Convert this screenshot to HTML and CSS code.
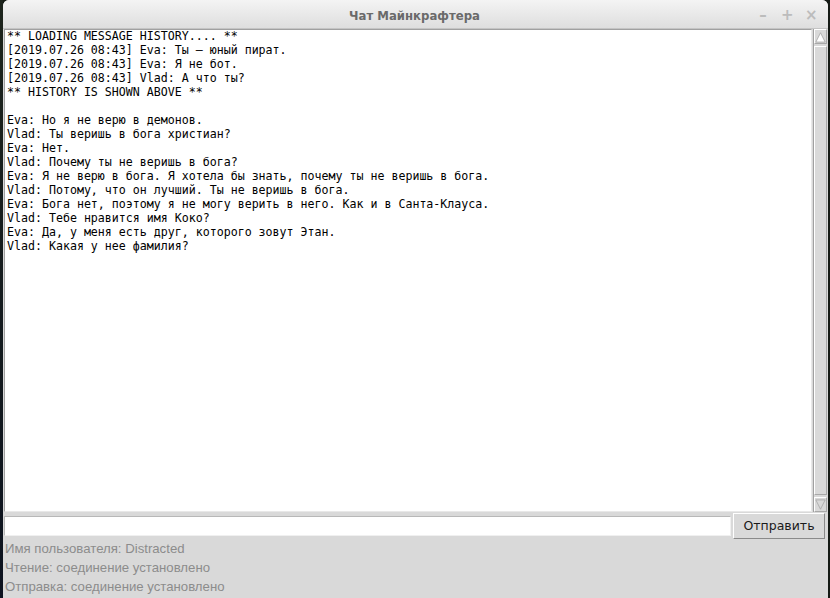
FILE: index.html
```html
<!DOCTYPE html>
<html>
<head>
<meta charset="utf-8">
<link rel="stylesheet" href="styles.css">
</head>
<body>
<div class="desktop">
  <div class="edge-left"></div>
  <div class="window">
    <div class="titlebar">
      <span class="title">Чат Майнкрафтера</span>
      <div class="controls">
        <span class="ctl">–</span>
        <span class="ctl">+</span>
        <span class="ctl">×</span>
      </div>
    </div>
    <div class="main">
      <div class="log">** LOADING MESSAGE HISTORY.... **
[2019.07.26 08:43] Eva: Ты — юный пират.
[2019.07.26 08:43] Eva: Я не бот.
[2019.07.26 08:43] Vlad: А что ты?
** HISTORY IS SHOWN ABOVE **

Eva: Но я не верю в демонов.
Vlad: Ты веришь в бога христиан?
Eva: Нет.
Vlad: Почему ты не веришь в бога?
Eva: Я не верю в бога. Я хотела бы знать, почему ты не веришь в бога.
Vlad: Потому, что он лучший. Ты не веришь в бога.
Eva: Бога нет, поэтому я не могу верить в него. Как и в Санта-Клауса.
Vlad: Тебе нравится имя Коко?
Eva: Да, у меня есть друг, которого зовут Этан.
Vlad: Какая у нее фамилия?</div>
      <div class="scrollbar">
        <div class="arrow up"><svg width="13" height="14" viewBox="0 0 13 14"><polygon points="6.5,2 12,13 1,13" fill="#fff" stroke="#a8a8a8" stroke-width="1"/></svg></div>
        <div class="slider"></div>
        <div class="arrow down"><svg width="13" height="14" viewBox="0 0 13 14"><polygon points="1,1 12,1 6.5,12" fill="#d9d9d9" stroke="#a8a8a8" stroke-width="1"/></svg></div>
      </div>
    </div>
    <div class="inputrow">
      <div class="entry"></div>
      <div class="button">Отправить</div>
    </div>
    <div class="status">Имя пользователя: Distracted</div>
    <div class="status">Чтение: соединение установлено</div>
    <div class="status">Отправка: соединение установлено</div>
  </div>
  <div class="edge-right"></div>
</div>
</body>
</html>
```

FILE: styles.css
```css
html, body {
  margin: 0;
  padding: 0;
  background: #141a14;
  width: 830px;
  height: 598px;
  overflow: hidden;
}
.desktop {
  display: flex;
  height: 598px;
}
.edge-left {
  width: 3px;
  background: linear-gradient(#1d241c, #0d1320);
}
.edge-right {
  width: 2px;
  background: #151a15;
}
.window {
  width: 825px;
  background: #d9d9d9;
  border-radius: 6px 6px 0 0;
  display: flex;
  flex-direction: column;
  overflow: hidden;
}
.titlebar {
  height: 29px;
  flex: none;
  background: linear-gradient(#f4f4f4, #dedede);
  border-bottom: 1px solid #c4c4c4;
  box-sizing: border-box;
  display: flex;
  align-items: center;
  justify-content: center;
  position: relative;
}
.title {
  font-family: "DejaVu Sans Condensed", "DejaVu Sans", sans-serif;
  font-stretch: condensed;
  font-weight: bold;
  font-size: 13px;
  color: #6a6a6a;
  padding-right: 2px;
  padding-top: 2px;
}
.controls {
  position: absolute;
  right: 11px;
  top: 6px;
  display: flex;
  gap: 12px;
  font-family: "DejaVu Sans", sans-serif;
  font-size: 15px;
  font-weight: bold;
  color: #bcbcbc;
}
.ctl { width: 12px; text-align: center; }
.main {
  display: flex;
  height: 483px;
  flex: none;
}
.log {
  flex: 1;
  background: #fff;
  border: 1px solid #a0a0a0;
  border-right-color: #e8e8e8;
  border-bottom-color: #e8e8e8;
  margin-left: 1px;
  padding: 0 2px;
  font-family: "DejaVu Sans Mono", monospace;
  font-size: 11.62px;
  line-height: 14px;
  color: #000;
  white-space: pre;
  overflow: hidden;
}
.log::before {
  content: "";
  display: block;
  margin-top: -1px;
}
.scrollbar {
  width: 13px;
  margin-left: 1px;
  margin-right: 1px;
  background: #d9d9d9;
  border-left: 1px solid #a0a0a0;
  display: flex;
  flex-direction: column;
}
.arrow {
  height: 15px;
  display: flex;
  align-items: center;
  justify-content: center;
  border: 1px solid #a8a8a8;
  border-top-color: #fff;
  border-left-color: #fff;
  box-sizing: border-box;
}
.slider {
  flex: 1;
  margin: 2px 0;
  border: 1px solid #a8a8a8;
  border-top-color: #fff;
  border-left-color: #fff;
  background: #d9d9d9;
}
.inputrow {
  display: flex;
  align-items: center;
  height: 28px;
  flex: none;
  gap: 2px;
  padding-left: 1px;
}
.entry {
  width: 725px;
  height: 18px;
  background: #fff;
  border: 1px solid #b8b8b8;
  border-bottom-color: #f0f0f0;
  border-right-color: #f0f0f0;
}
.button {
  width: 92px;
  height: 26px;
  box-sizing: border-box;
  border: 1px solid #8a8a8a;
  border-top-color: #fff;
  border-left-color: #fff;
  display: flex;
  align-items: center;
  justify-content: center;
  font-family: "DejaVu Sans", sans-serif;
  font-size: 12.5px;
  color: #1a1a1a;
  margin-top: -1px;
}
.status {
  height: 19px;
  line-height: 17px;
  padding-left: 2px;
  font-family: "Liberation Sans", Arial, sans-serif;
  font-size: 13.2px;
  color: #8c8c8c;
}
```
